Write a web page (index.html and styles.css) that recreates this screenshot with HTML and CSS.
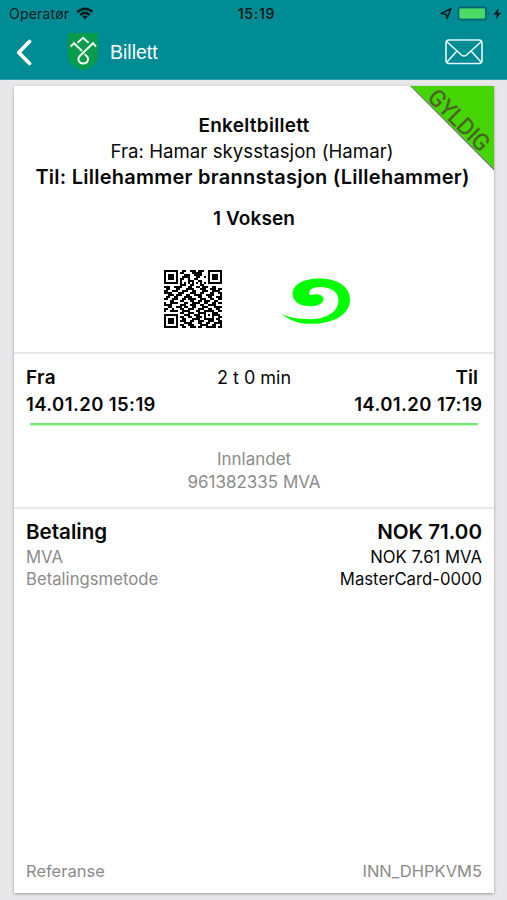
FILE: index.html
```html
<!DOCTYPE html>
<html lang="no">
<head>
<meta charset="utf-8">
<title>Billett</title>
<link rel="stylesheet" href="styles.css">
</head>
<body>
<header class="top">
  <div class="status">
    <div class="carrier"><span>Operatør</span>
      <svg width="18" height="13" viewBox="0 0 18 13" fill="none" stroke="#051c1e" stroke-width="2.5"><path d="M1.4 5.1Q9-1.7 16.6 5.1M4.2 8Q9 3.8 13.8 8"/><path d="M9 12.3L6.3 9.6Q9 7.4 11.7 9.6Z" fill="#051c1e" stroke="none"/></svg>
    </div>
    <span class="clock">15:19</span>
    <div class="power">
      <svg width="62" height="16" viewBox="0 0 62 16"><path d="M1.2 7.5L11 2.7L6.9 12.7L6.2 8.2Z" fill="none" stroke="#051c1e" stroke-width="1.5" stroke-linejoin="round"/><rect x="18.2" y="1.3" width="28" height="12.4" rx="2.5" fill="none" stroke="#05636a" stroke-width="1.4"/><rect x="19.5" y="2.6" width="25.5" height="9.8" rx="1" fill="#4cd964"/><path d="M48 5.5Q50.5 7.7 48 10Z" fill="#05636a"/><path d="M58.5 2L53.5 8.8H56.8L55.5 14L61 6.8H57.9Z" fill="#051c1e"/></svg>
    </div>
  </div>
  <nav class="bar">
    <svg class="back" width="18" height="28" viewBox="0 0 18 28"><path d="M14.5 3.5L3.8 14.5L14.5 25.5" fill="none" stroke="#fff" stroke-width="3.7" stroke-linecap="round" stroke-linejoin="round"/></svg>
    <svg class="shield" width="30" height="38" viewBox="0 0 30 38"><path d="M0 0H30V22C30 31 23 34.5 15 37.5C7 34.5 0 31 0 22Z" fill="#079b4b"/><path d="M9.5 9.7L15 4.8L20.5 9.7M2.5 13.6L6 10.2L14 18M28 13.6L25 10.2L12 22.7C8.8 25.8 10.8 30.5 15.3 30.5C19.7 30.5 21.6 26 18.6 23L16.6 21.2" fill="none" stroke="#f4fff5" stroke-width="1.9"/></svg>
    <h1 class="title">Billett</h1>
    <svg class="mail" width="38" height="26" viewBox="0 0 38 26" fill="none" stroke="#e4fafa" stroke-width="1.6" stroke-linejoin="round"><rect x="1" y="1" width="36" height="23.5" rx="3"/><path d="M1.6 2.5L16.5 16Q19 18 21.5 16L36.4 2.5M2 23L11.5 12.5M36 23L26.5 12.5"/></svg>
  </nav>
</header>
<main class="card">
  <svg class="ribbon" width="84" height="88" viewBox="0 0 84 88"><path d="M0 0L84 84.5V82L2 0Z" fill="#777"/><path d="M1.5 0H84V82.5Z" fill="#44d502"/><text x="48.5" y="40.5" transform="rotate(45 47 34)" text-anchor="middle" textLength="77" class="valid">GYLDIG</text></svg>
  <section class="ticket">
    <p class="kind">Enkeltbillett</p>
    <p class="from">Fra: Hamar skysstasjon (Hamar)</p>
    <p class="to">Til: Lillehammer brannstasjon (Lillehammer)</p>
    <p class="who">1 Voksen</p>
    <div class="marks">
      <svg class="qr" width="58" height="58" viewBox="0 0 29 29" shape-rendering="crispEdges"><path id="qr"/></svg>
      <svg class="swirl" width="70" height="47" viewBox="0 0 70 47"><path d="M.5 36C9 42.5 17 45.8 30 45.8C52 45.8 69 37 69 21.5C69 9 57 .6 38 .6C22 .6 11.5 7 11.5 16C11.5 23.5 19.5 28.3 29 28.3C37.5 28.3 43 25 42.5 20.5C42 16.5 35 15 29 17.3C26 12.5 32 9 39 9C50 9 57.5 14 57.5 22.5C57.5 34 45 41 30 41.2C18 41.3 9 39.5 .5 36Z" fill="#0f0"/></svg>
    </div>
  </section>
  <section class="time">
    <div class="row labels"><b class="fra">Fra</b><span class="dur">2 t 0 min</span><b class="til">Til</b></div>
    <div class="row dates"><b>14.01.20 15:19</b><b>14.01.20 17:19</b></div>
    <div class="line"></div>
    <p class="org">Innlandet</p>
    <p class="org">961382335 MVA</p>
  </section>
  <section class="pay">
    <div class="row sum"><b>Betaling</b><b>NOK 71.00</b></div>
    <div class="row small"><span class="grey">MVA</span><span>NOK 7.61 MVA</span></div>
    <div class="row small"><span class="grey">Betalingsmetode</span><span>MasterCard-0000</span></div>
  </section>
  <footer class="row ref"><span>Referanse</span><span>INN_DHPKVM5</span></footer>
</main>
<script src="qr.js"></script>
</body>
</html>
```

FILE: styles.css
```css
* { box-sizing: border-box; }
body { margin: 0; width: 507px; height: 900px; overflow: hidden; background: #e8e8ea; color: #080808; font-family: Inter, "Liberation Sans", sans-serif; font-size: 18px; }
p, h1 { margin: 0; font-weight: 400; }
svg { display: block; flex: none; }
.top { height: 80px; background: #008c94; border-bottom: 1px solid #339da5; }
.status { display: grid; grid-template-columns: 1fr auto 1fr; height: 27px; align-items: center; padding: 0 5px 0 9px; color: #051c1e; font-size: 14px; }
.carrier { display: flex; align-items: center; gap: 7px; letter-spacing: .2px; }
.clock { padding-left: 2px; font-weight: 600; letter-spacing: .7px; }
.power { justify-self: end; }
.bar { display: flex; height: 52px; align-items: center; padding: 0 24px 2px 15px; color: #fff; }
.shield { margin-left: 35px; }
.title { margin-left: 12px; font: 19.5px "Liberation Sans", sans-serif; }
.mail { margin-left: auto; }
.card { position: relative; display: flex; flex-direction: column; width: 480px; height: 807px; margin: 6px 0 0 14px; background: #fff; box-shadow: 0 1px 3px #999; }
.ribbon { position: absolute; right: 0; top: 0; overflow: visible; }
.valid { font: 23px Roboto, sans-serif; fill: #4c6227; stroke: #4c6227; stroke-width: .3px; }
.ticket { height: 268px; padding-top: 27px; border-bottom: 2px solid #e9e9eb; text-align: center; }
.ticket p { line-height: 26px; white-space: nowrap; }
.ticket .kind { font-size: 19px; font-weight: 600; letter-spacing: .28px; }
.ticket .from { font-size: 18.6px; line-height: 25px; padding-right: 4px; letter-spacing: .05px; }
.ticket .to { font-size: 20px; font-weight: 600; letter-spacing: .25px; padding-right: 3px; }
.ticket .who { font-size: 19px; font-weight: 600; letter-spacing: .1px; margin-top: 16px; }
.marks { display: flex; align-items: center; padding-left: 150px; margin-top: 38px; }
.swirl { margin: 5px 0 0 59px; }
.time { height: 155px; padding: 11px 12px 0; border-bottom: 2px solid #e9e9eb; }
.row { display: flex; justify-content: space-between; }
.row b { font-weight: 600; }
.labels { display: grid; grid-template-columns: 1fr auto 1fr; height: 26px; line-height: 26px; font-size: 19px; }
.fra { letter-spacing: .3px; }
.dur { font-size: 18px; }
.til { justify-self: end; margin-right: 4px; }
.dates { height: 27px; line-height: 27px; font-size: 18.5px; letter-spacing: .4px; }
.dates b:last-child { margin-right: -.4px; }
.line { height: 3px; margin: 5px 4px 0; background: linear-gradient(#73ee73 2px, #c8f9c8 2px); }
.org { text-align: center; color: #8b8b8b; font-size: 17px; line-height: 23px; }
.line + .org { margin-top: 22px; }
.pay { padding: 9px 12px 0; }
.sum { height: 28px; line-height: 27px; font-size: 20.6px; }
.small { height: 22px; line-height: 22px; font-size: 16.7px; }
.grey, .ref { color: #8b8b8b; }
.ref { margin-top: auto; padding: 0 12px 11px; font-size: 16.5px; line-height: 22px; }
```

FILE: qr.js
```js
const rows = [
  "11111110011001110111001111111",
  "10000010110000111110001000001",
  "10111010001110011110001011101",
  "10111010011110001100101011101",
  "10111010110010011000001011101",
  "10000010100011100110001000001",
  "11111110101010101010101111111",
  "00000000111001100011000000000",
  "11100111100011001101110011000",
  "01100011000111100011100111011",
  "11001110011100110001110011110",
  "11110001110001110011000110011",
  "00111011100110011110011110001",
  "01100110001111000110001100111",
  "11001110011011110011100110011",
  "00011000110001100110111001100",
  "10011110001100111100110011011",
  "11110000111001110011001111000",
  "00110011101100110001110001111",
  "11001000110011100111001100110",
  "10011110011110001100111110011",
  "00000000110011100111100011100",
  "11111110001110011100101011110",
  "10000010110011001110100010011",
  "10111010011000111100111110110",
  "10111010111001100111001110011",
  "10111010001111000110011001111",
  "10000010110011100011110011001",
  "11111110011001110110011111011"
];
let d = "";
rows.forEach((row, y) => [...row].forEach((cell, x) => {
  if (cell === "1") d += `M${x} ${y}h1v1h-1z`;
}));
document.getElementById("qr").setAttribute("d", d);
```
